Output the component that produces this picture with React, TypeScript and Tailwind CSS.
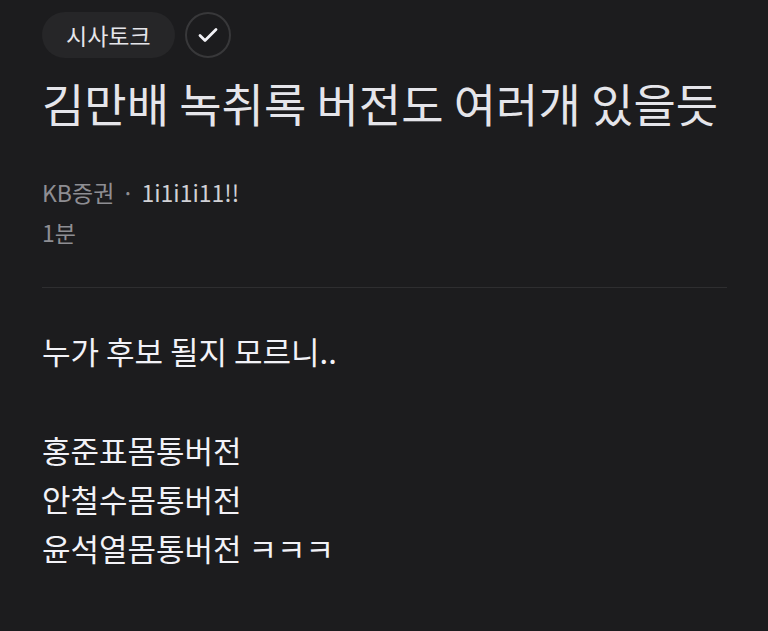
import React from "react";

const font = { fontFamily: '"Noto Sans CJK KR", "Noto Sans", sans-serif' };

export default function App() {
  return (
    <div className="w-[768px] h-[631px] bg-[#1c1c1e] overflow-hidden px-[42px]" style={font}>
      <div className="flex items-center gap-[10px] pt-[12px]">
        <span className="h-[46px] px-[24px] rounded-full bg-[#262628] text-[#e5e5ea] text-[23px] flex items-center">
          시사토크
        </span>
        <span className="w-[46px] h-[46px] rounded-full border-2 border-[#38383a] flex items-center justify-center">
          <svg width="24" height="24" viewBox="0 0 24 24" fill="none" stroke="#f2f2f7" strokeWidth="2.8" strokeLinecap="round" strokeLinejoin="round">
            <path d="M4 12.5l5 5L20 6.5" />
          </svg>
        </span>
      </div>

      <h1 className="mt-[14px] text-[46px] leading-[60px] text-[#e5e5ea] whitespace-nowrap">
        김만배 녹취록 버전도 여러개 있을듯
      </h1>

      <div className="mt-[40px] text-[23px] leading-[41px]">
        <div className="text-[#8e8e93]">
          KB증권 <span className="mx-[2px]">·</span> <span className="text-[#d1d1d6]">1i1i1i11!!</span>
        </div>
        <div className="text-[#8e8e93] leading-[39px]">1분</div>
      </div>

      <div className="mt-[35px] h-px bg-[#2e2e30] w-[685px]" />

      <div className="mt-[38px] text-[31px] leading-[49px] text-[#f2f2f7]">
        <p>누가 후보 될지 모르니..</p>
        <p className="h-[50px]" />
        <p>홍준표몸통버전</p>
        <p>안철수몸통버전</p>
        <p>윤석열몸통버전 ㅋㅋㅋ</p>
      </div>
    </div>
  );
}
